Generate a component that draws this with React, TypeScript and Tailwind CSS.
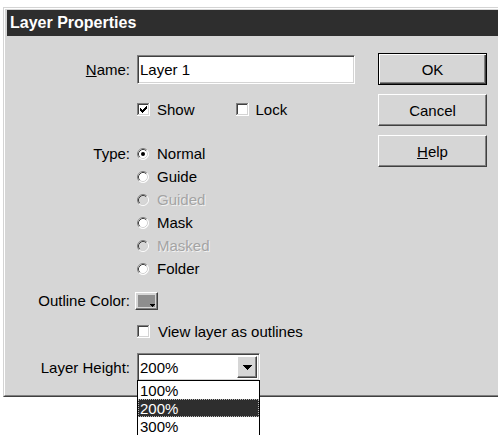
import type { ReactNode } from "react";

const CHECK_PIXELS = [
    [6, 0],
    [5, 1], [6, 1],
    [0, 2], [4, 2], [5, 2], [6, 2],
    [0, 3], [1, 3], [3, 3], [4, 3], [5, 3],
    [0, 4], [1, 4], [2, 4], [3, 4], [4, 4],
    [1, 5], [2, 5], [3, 5],
    [2, 6],
];

const Checkbox = ({ checked }: { checked?: boolean }) => (
    <svg width="13" height="13" viewBox="0 0 13 13" shapeRendering="crispEdges" className="shrink-0">
        <rect x="0" y="0" width="13" height="13" fill="#ffffff" />
        <rect x="0" y="0" width="12" height="1" fill="#808080" />
        <rect x="0" y="0" width="1" height="12" fill="#808080" />
        <rect x="1" y="1" width="10" height="1" fill="#404040" />
        <rect x="1" y="1" width="1" height="10" fill="#404040" />
        <rect x="1" y="11" width="11" height="1" fill="#d4d4d4" />
        <rect x="11" y="1" width="1" height="11" fill="#d4d4d4" />
        {checked &&
            CHECK_PIXELS.map(([x, y], i) => (
                <rect key={i} x={x + 3} y={y + 3} width="1" height="1" fill="#000" />
            ))}
    </svg>
);

const Radio = ({ checked, disabled }: { checked?: boolean; disabled?: boolean }) => (
    <svg width="12" height="12" viewBox="0 0 12 12" className="shrink-0">
        <circle cx="6" cy="6" r="5.5" fill={disabled ? "#d6d6d6" : "#ffffff"} />
        <path d="M2.11 9.89 A5.5 5.5 0 0 1 9.89 2.11" fill="none" stroke="#808080" />
        <path d="M2.82 9.18 A4.5 4.5 0 0 1 9.18 2.82" fill="none" stroke="#404040" />
        <path d="M9.89 2.11 A5.5 5.5 0 0 1 2.11 9.89" fill="none" stroke="#ffffff" />
        <path d="M9.18 2.82 A4.5 4.5 0 0 1 2.82 9.18" fill="none" stroke="#d4d4d4" />
        {checked && <circle cx="6" cy="6" r="2" fill="#000" />}
    </svg>
);

const Row = ({ label, className, children }: { label?: ReactNode; className?: string; children: ReactNode }) => (
    <div className={`flex items-center ${className ?? ""}`}>
        <div className="w-[123px] shrink-0 text-right whitespace-nowrap">{label}</div>
        <div className="ml-[7px] flex items-center">{children}</div>
    </div>
);

const Button = ({ children, isDefault }: { children: ReactNode; isDefault?: boolean }) => (
    <div
        className={`w-[109px] h-[32px] flex items-center justify-center bg-[#d6d6d6] ${
            isDefault
                ? "border border-black shadow-[inset_1px_1px_#ffffff,inset_-1px_-1px_#404040,inset_-2px_-2px_#808080]"
                : "border border-t-white border-l-white border-b-[#404040] border-r-[#404040] shadow-[inset_-1px_-1px_#808080]"
        }`}
    >
        {children}
    </div>
);

const sunken =
    "border border-t-[#808080] border-l-[#808080] border-b-white border-r-white shadow-[inset_1px_1px_#404040,inset_-1px_-1px_#d4d4d4]";

const RadioItem = ({ label, checked, disabled }: { label: string; checked?: boolean; disabled?: boolean }) => (
    <div className="flex items-center gap-[8px]">
        <Radio checked={checked} disabled={disabled} />
        <span className={disabled ? "text-[#a4a4a4] [text-shadow:1px_1px_0_#f2f2f2]" : ""}>{label}</span>
    </div>
);

export default function App() {
    return (
        <div className="relative w-[498px] h-[435px] overflow-hidden bg-white text-[15px] leading-none text-black font-['Liberation_Sans',Arial,sans-serif]">
            <div className="ml-[3px] mt-[7px] w-[520px] h-[390px] border border-t-[#d4d4d4] border-l-[#d4d4d4] border-b-[#404040] border-r-[#404040]">
                <div className="h-full pt-px px-[2px] bg-[#d6d6d6] border border-t-white border-l-white border-b-[#808080] border-r-[#808080]">
                    <div className="h-[26px] pl-[3px] flex items-center bg-[#2e2e2e] text-white font-bold text-[16px]">
                        Layer Properties
                    </div>

                    <div className="flex">
                        {/* form */}
                        <div className="w-[371px] flex flex-col">
                            <Row label={<><span className="underline">N</span>ame:</>} className="mt-[19px] h-[29px]">
                                <div className={`w-[218px] h-[29px] pl-[2px] flex items-center bg-white ${sunken}`}>
                                    Layer 1
                                </div>
                            </Row>

                            <Row className="mt-[15px] h-[20px]">
                                <div className="flex items-center gap-[7px]">
                                    <Checkbox checked />
                                    <span>Show</span>
                                </div>
                                <div className="ml-[41px] flex items-center gap-[7px]">
                                    <Checkbox />
                                    <span>Lock</span>
                                </div>
                            </Row>

                            <div className="mt-[23px] flex flex-col">
                                <Row label="Type:" className="h-[23px]">
                                    <RadioItem label="Normal" checked />
                                </Row>
                                <Row className="h-[23px]">
                                    <RadioItem label="Guide" />
                                </Row>
                                <Row className="h-[23px]">
                                    <RadioItem label="Guided" disabled />
                                </Row>
                                <Row className="h-[23px]">
                                    <RadioItem label="Mask" />
                                </Row>
                                <Row className="h-[23px]">
                                    <RadioItem label="Masked" disabled />
                                </Row>
                                <Row className="h-[23px]">
                                    <RadioItem label="Folder" />
                                </Row>
                            </div>

                            <Row label="Outline Color:" className="mt-[9px] h-[23px]">
                                <div className="-ml-[2px] w-[23px] h-[18px] p-[2px] bg-[#d6d6d6] border border-t-white border-l-white border-b-[#404040] border-r-[#404040] shadow-[inset_-1px_-1px_#808080]">
                                    <div className="relative w-full h-full bg-[#8e8e8e]">
                                        <svg width="5" height="3" viewBox="0 0 5 3" className="absolute right-0 bottom-0" shapeRendering="crispEdges">
                                            <path d="M0 0h5v1h-1v1h-1v1h-1v-1h-1v-1h-1z" fill="#000" />
                                        </svg>
                                    </div>
                                </div>
                            </Row>

                            <Row className="mt-[9px] h-[20px]">
                                <div className="flex items-center gap-[8px]">
                                    <Checkbox />
                                    <span>View layer as outlines</span>
                                </div>
                            </Row>

                            <Row label="Layer Height:" className="mt-[12px] h-[28px]">
                                <div className={`w-[123px] h-[28px] pl-[2px] pr-[2px] flex items-center justify-between bg-white ${sunken}`}>
                                    <span>200%</span>
                                    <div className="w-[20px] h-[22px] flex items-center justify-center bg-[#d6d6d6] border border-t-white border-l-white border-b-[#404040] border-r-[#404040] shadow-[inset_-1px_-1px_#808080]">
                                        <svg width="9" height="5" viewBox="0 0 9 5" shapeRendering="crispEdges">
                                            <path d="M0 0h9v1h-1v1h-1v1h-1v1h-1v1h-1v-1h-1v-1h-1v-1h-1v-1h-1z" fill="#000" />
                                        </svg>
                                    </div>
                                </div>
                            </Row>
                        </div>

                        {/* buttons */}
                        <div className="pt-[17px] flex flex-col gap-[9px]">
                            <Button isDefault>OK</Button>
                            <Button>Cancel</Button>
                            <Button>
                                <span>
                                    <span className="underline">H</span>elp
                                </span>
                            </Button>
                        </div>
                    </div>
                </div>
            </div>

            {/* open list of the height select */}
            <div className="absolute left-[137px] top-[380px] w-[123px] h-[60px] bg-white border border-black">
                <div className="h-[18px] pl-[2px] flex items-center">100%</div>
                <div className="h-[18px] pl-[2px] flex items-center bg-[#2e2e2e] text-white outline-1 outline-dotted outline-[#bbbbbb] -outline-offset-1">
                    200%
                </div>
                <div className="h-[18px] pl-[2px] flex items-center">300%</div>
            </div>
        </div>
    );
}
